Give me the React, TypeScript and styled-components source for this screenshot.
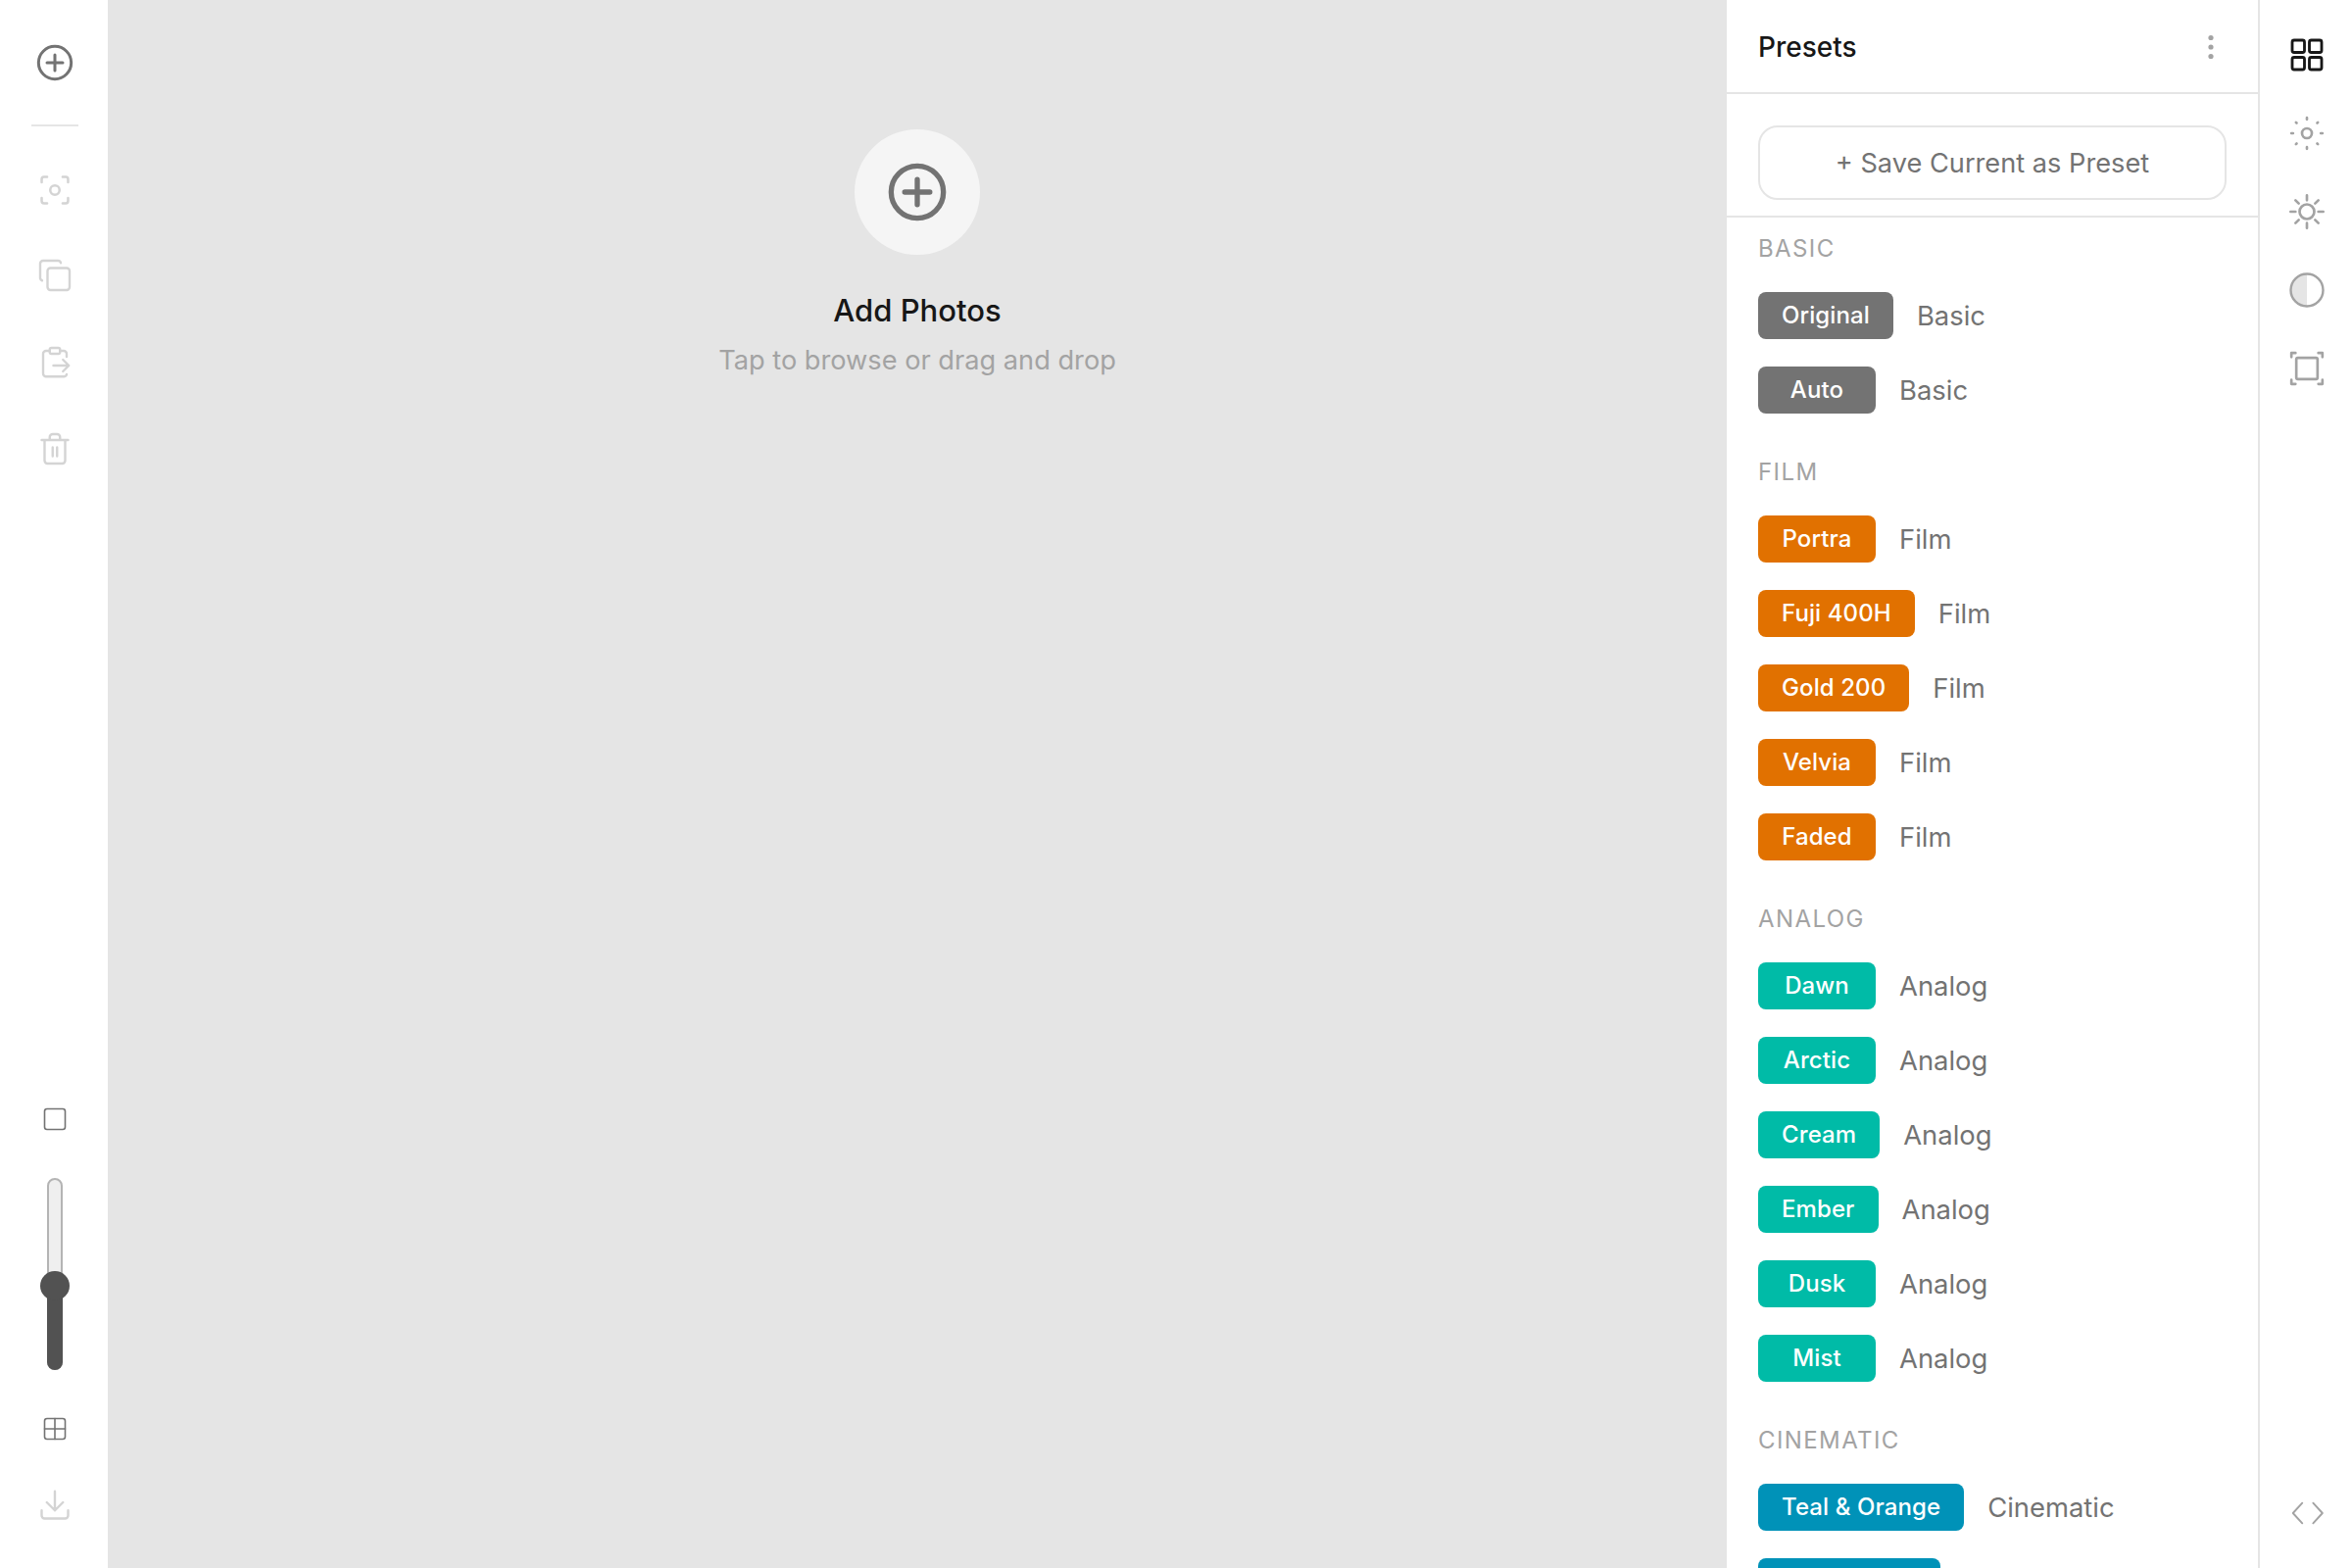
import React from "react";
import styled, { createGlobalStyle } from "styled-components";

const Global = createGlobalStyle`
  html, body { margin: 0; padding: 0; height: 100%; background: #fff; }
  body { font-family: Inter, "Liberation Sans", sans-serif; overflow: hidden; }
  #root { height: 100%; }
`;

const Page = styled.div`
  display: flex;
  width: 2400px;
  height: 1600px;
  overflow: hidden;
`;

const LeftRail = styled.aside`
  width: 110px;
  flex: none;
  height: 100%;
  box-sizing: border-box;
  padding-left: 2px;
  background: #fff;
  display: flex;
  flex-direction: column;
  align-items: center;
`;

const RailIcon = styled.div<{ $h?: number; $mt?: number }>`
  height: ${(p) => p.$h ?? 44}px;
  margin-top: ${(p) => p.$mt ?? 0}px;
  display: flex;
  align-items: center;
  justify-content: center;
  flex: none;
`;

const RailRule = styled.div`
  width: 48px;
  height: 2px;
  background: #e5e5e5;
  margin-top: 41px;
  flex: none;
`;

const Spacer = styled.div`
  flex: 1;
`;

const Slider = styled.div`
  position: relative;
  width: 16px;
  height: 196px;
  margin-top: 38px;
  box-sizing: border-box;
  border: 2px solid #b4b4b4;
  border-radius: 8px;
  background: #efefef;
  flex: none;
`;

const SliderFill = styled.div`
  position: absolute;
  left: -2px;
  right: -2px;
  bottom: -2px;
  height: 86px;
  background: #525252;
  border-radius: 0 0 8px 8px;
`;

const SliderThumb = styled.div`
  position: absolute;
  left: 50%;
  bottom: 69px;
  width: 30px;
  height: 30px;
  margin-left: -15px;
  border-radius: 50%;
  background: #525252;
`;

const Canvas = styled.main`
  flex: 1;
  min-width: 0;
  height: 100%;
  background: #e5e5e5;
  display: flex;
  flex-direction: column;
  align-items: center;
  padding: 132px 0 0 2px;
  box-sizing: border-box;
`;

const AddCircle = styled.div`
  width: 128px;
  height: 128px;
  border-radius: 50%;
  background: #f5f5f5;
  display: flex;
  align-items: center;
  justify-content: center;
`;

const AddTitle = styled.div`
  margin-top: 37px;
  font-size: 31px;
  line-height: 40px;
  font-weight: 500;
  color: #171717;
`;

const AddHint = styled.div`
  margin-top: 11px;
  font-size: 27.2px;
  line-height: 40px;
  font-weight: 400;
  color: #a3a3a3;
`;

const Panel = styled.section`
  width: 546px;
  flex: none;
  height: 100%;
  box-sizing: border-box;
  background: #fff;
  border-left: 2px solid #e5e5e5;
  border-right: 2px solid #e5e5e5;
  overflow: hidden;
`;

const PanelHead = styled.header`
  height: 96px;
  box-sizing: border-box;
  border-bottom: 2px solid #e5e5e5;
  display: flex;
  align-items: center;
  justify-content: space-between;
  padding: 2px 44px 0 32px;
`;

const PanelTitle = styled.h1`
  margin: 0;
  font-size: 28px;
  font-weight: 500;
  color: #171717;
`;

const SaveWrap = styled.div`
  height: 126px;
  box-sizing: border-box;
  padding: 32px 32px 0;
  border-bottom: 2px solid #e5e5e5;
`;

const SaveButton = styled.button`
  width: 100%;
  height: 76px;
  box-sizing: border-box;
  border: 2px solid #e5e5e5;
  border-radius: 20px;
  background: #fff;
  color: #737373;
  font-family: inherit;
  font-size: 27.2px;
  font-weight: 400;
`;

const List = styled.div`
  padding: 16px 32px 0;
`;

const SectionLabel = styled.div`
  height: 32px;
  line-height: 32px;
  font-size: 24px;
  font-weight: 400;
  letter-spacing: 1.4px;
  color: #a3a3a3;
`;

const Section = styled.div`
  & + & { margin-top: 44px; }
`;

const Row = styled.div`
  display: flex;
  align-items: center;
  gap: 24px;
  height: 48px;
  margin-top: 28px;
`;

const Badge = styled.span<{ $color: string }>`
  display: inline-flex;
  align-items: center;
  justify-content: center;
  box-sizing: border-box;
  height: 48px;
  min-width: 120px;
  padding: 0 24px 1px;
  border-radius: 8px;
  background: ${(p) => p.$color};
  color: #fff;
  font-size: 24px;
  font-weight: 500;
  letter-spacing: 0.1px;
`;

const Tag = styled.span`
  font-size: 27.4px;
  font-weight: 400;
  color: #737373;
`;

const RightRail = styled.aside`
  width: 94px;
  flex: none;
  height: 100%;
  background: #fff;
  display: flex;
  flex-direction: column;
  align-items: center;
  padding: 34px 0 34px 2px;
  box-sizing: border-box;
`;

const RightIcon = styled.div`
  width: 44px;
  height: 44px;
  display: flex;
  align-items: center;
  justify-content: center;
  flex: none;
  & + & { margin-top: 36px; }
`;

const G = "#d4d4d4";
const D = "#737373";
const M = "#a3a3a3";

type IP = { c?: string; s?: number; w?: number };
const Svg: React.FC<IP & { children: React.ReactNode }> = ({ c = D, s = 40, w = 1.6, children }) => (
  <svg width={s} height={s} viewBox="0 0 24 24" fill="none" stroke={c} strokeWidth={w} strokeLinecap="round" strokeLinejoin="round">
    {children}
  </svg>
);

const PlusCircle: React.FC<IP> = (p) => (
  <Svg {...p}>
    <circle cx="12" cy="12" r="10" />
    <path d="M12 7.200v9.600M7.200 12h9.600" />
  </Svg>
);
const Scan: React.FC<IP> = (p) => (
  <Svg {...p}>
    <path d="M3.500 7V5a1.500 1.500 0 0 1 1.500-1.500h2M17 3.500h2A1.500 1.500 0 0 1 20.500 5v2M20.500 17v2a1.500 1.500 0 0 1-1.500 1.500h-2M7 20.500H5A1.500 1.500 0 0 1 3.500 19v-2" />
    <circle cx="12" cy="12" r="3" />
  </Svg>
);
const Copy: React.FC<IP> = (p) => (
  <Svg {...p}>
    <rect x="7" y="7" width="15" height="15" rx="2" />
    <path d="M3.300 15.500A2 2 0 0 1 2 14V4a2 2 0 0 1 2-2h10a2 2 0 0 1 2 1.500" />
  </Svg>
);
const ClipExport: React.FC<IP> = (p) => (
  <Svg {...p}>
    <rect x="8.500" y="2" width="7" height="4" rx="1.200" />
    <path d="M15.500 4H18a2 2 0 0 1 2 2v2M8.500 4H6a2 2 0 0 0-2 2v13.500a2 2 0 0 0 2 2h12a2 2 0 0 0 2-1.500" />
    <path d="M11 14h10M17.500 10l4 4-4 4" />
  </Svg>
);
const Trash: React.FC<IP> = (p) => (
  <Svg {...p}>
    <path d="M3 6h18M5 6v14a2 2 0 0 0 2 2h10a2 2 0 0 0 2-2V6M8.500 6V4a2 2 0 0 1 2-2h3a2 2 0 0 1 2 2v2M10.500 11v6M13.500 11v6" />
  </Svg>
);
const Square: React.FC<IP> = (p) => (
  <Svg {...p} s={24}>
    <rect x="1.500" y="1.500" width="21" height="21" rx="2.500" />
  </Svg>
);
const Grid2: React.FC<IP> = (p) => (
  <Svg {...p} s={24}>
    <rect x="1.500" y="1.500" width="21" height="21" rx="2.500" />
    <path d="M12 1.500v21M1.500 12h21" />
  </Svg>
);
const Download: React.FC<IP> = (p) => (
  <Svg {...p}>
    <path d="M3 15.500V19a2 2 0 0 0 2 2h14a2 2 0 0 0 2-2v-3.500M12 2.500v13M6.500 10l5.500 5.500 5.500-5.500" />
  </Svg>
);
const Grid4: React.FC<IP> = (p) => (
  <Svg {...p}>
    <rect x="3" y="3" width="7.500" height="7.500" rx="1.200" />
    <rect x="13.500" y="3" width="7.500" height="7.500" rx="1.200" />
    <rect x="3" y="13.500" width="7.500" height="7.500" rx="1.200" />
    <rect x="13.500" y="13.500" width="7.500" height="7.500" rx="1.200" />
  </Svg>
);
const SunDots: React.FC<IP> = (p) => (
  <Svg {...p}>
    <circle cx="12" cy="12" r="3" />
    <path d="M12 2.500v1M12 20.500v1M2.500 12h1M20.500 12h1M5.300 5.300l.4.4M18.300 18.300l.4.4M5.300 18.700l.4-.4M18.300 5.700l.4-.4" />
  </Svg>
);
const Sun: React.FC<IP> = (p) => (
  <Svg {...p}>
    <circle cx="12" cy="12" r="4.500" />
    <path d="M12 2v3M12 19v3M2 12h3M19 12h3M5 5l2 2M17 17l2 2M5 19l2-2M17 7l2-2" />
  </Svg>
);
const Contrast: React.FC<IP> = (p) => (
  <Svg {...p} s={36}>
    <path d="M12 1A11 11 0 0 0 12 23Z" fill="#e5e5e5" stroke="none" />
    <circle cx="12" cy="12" r="11" />
  </Svg>
);
const Crop: React.FC<IP> = (p) => (
  <Svg {...p}>
    <rect x="5.500" y="5.500" width="13" height="13" rx="1" />
    <path d="M2.500 5V2.500H5M19 2.500h2.500V5M21.500 19v2.500H19M5 21.500H2.500V19" />
  </Svg>
);
const Code: React.FC<IP> = (p) => (
  <Svg {...p}>
    <path d="M9 5.500 3 12l6 6.500M16 5.500l6 6.500-6 6.500" />
  </Svg>
);
const Kebab = () => (
  <svg width="8" height="26" viewBox="0 0 8 26" fill="#a3a3a3">
    <circle cx="4" cy="3.500" r="2.600" />
    <circle cx="4" cy="13" r="2.600" />
    <circle cx="4" cy="22.500" r="2.600" />
  </svg>
);

const GRAY = "#737373";
const ORANGE = "#e17100";
const TEAL = "#00bba7";
const BLUE = "#0092b8";

const sections = [
  { title: "BASIC", tag: "Basic", color: GRAY, items: ["Original", "Auto"] },
  { title: "FILM", tag: "Film", color: ORANGE, items: ["Portra", "Fuji 400H", "Gold 200", "Velvia", "Faded"] },
  { title: "ANALOG", tag: "Analog", color: TEAL, items: ["Dawn", "Arctic", "Cream", "Ember", "Dusk", "Mist"] },
  { title: "CINEMATIC", tag: "Cinematic", color: BLUE, items: ["Teal & Orange", "Blockbuster"] },
];

export default function App() {
  return (
    <Page>
      <Global />
      <LeftRail>
        <RailIcon $mt={42}><PlusCircle s={40} w={1.8} /></RailIcon>
        <RailRule />
        <RailIcon $mt={43}><Scan c={G} s={38} /></RailIcon>
        <RailIcon $mt={43}><Copy c={G} s={36} /></RailIcon>
        <RailIcon $mt={45}><ClipExport c={G} s={36} /></RailIcon>
        <RailIcon $mt={44}><Trash c={G} s={36} /></RailIcon>
        <Spacer />
        <RailIcon><Square c={D} /></RailIcon>
        <Slider>
          <SliderFill />
          <SliderThumb />
        </Slider>
        <RailIcon $mt={38}><Grid2 c={D} /></RailIcon>
        <RailIcon $mt={34}><Download c={G} s={36} /></RailIcon>
        <RailIcon $h={42} />
      </LeftRail>
      <Canvas>
        <AddCircle><PlusCircle s={64} w={2} /></AddCircle>
        <AddTitle>Add Photos</AddTitle>
        <AddHint>Tap to browse or drag and drop</AddHint>
      </Canvas>
      <Panel>
        <PanelHead>
          <PanelTitle>Presets</PanelTitle>
          <Kebab />
        </PanelHead>
        <SaveWrap>
          <SaveButton>+ Save Current as Preset</SaveButton>
        </SaveWrap>
        <List>
          {sections.map((s) => (
            <Section key={s.title}>
              <SectionLabel>{s.title}</SectionLabel>
              {s.items.map((i) => (
                <Row key={i}>
                  <Badge $color={s.color}>{i}</Badge>
                  <Tag>{s.tag}</Tag>
                </Row>
              ))}
            </Section>
          ))}
        </List>
      </Panel>
      <RightRail>
        <RightIcon><Grid4 c="#171717" s={40} w={1.7} /></RightIcon>
        <RightIcon><SunDots c={M} /></RightIcon>
        <RightIcon><Sun c={M} /></RightIcon>
        <RightIcon><Contrast c={M} /></RightIcon>
        <RightIcon><Crop c={M} /></RightIcon>
        <Spacer />
        <RightIcon><Code c={M} s={38} w={1.2} /></RightIcon>
      </RightRail>
    </Page>
  );
}
